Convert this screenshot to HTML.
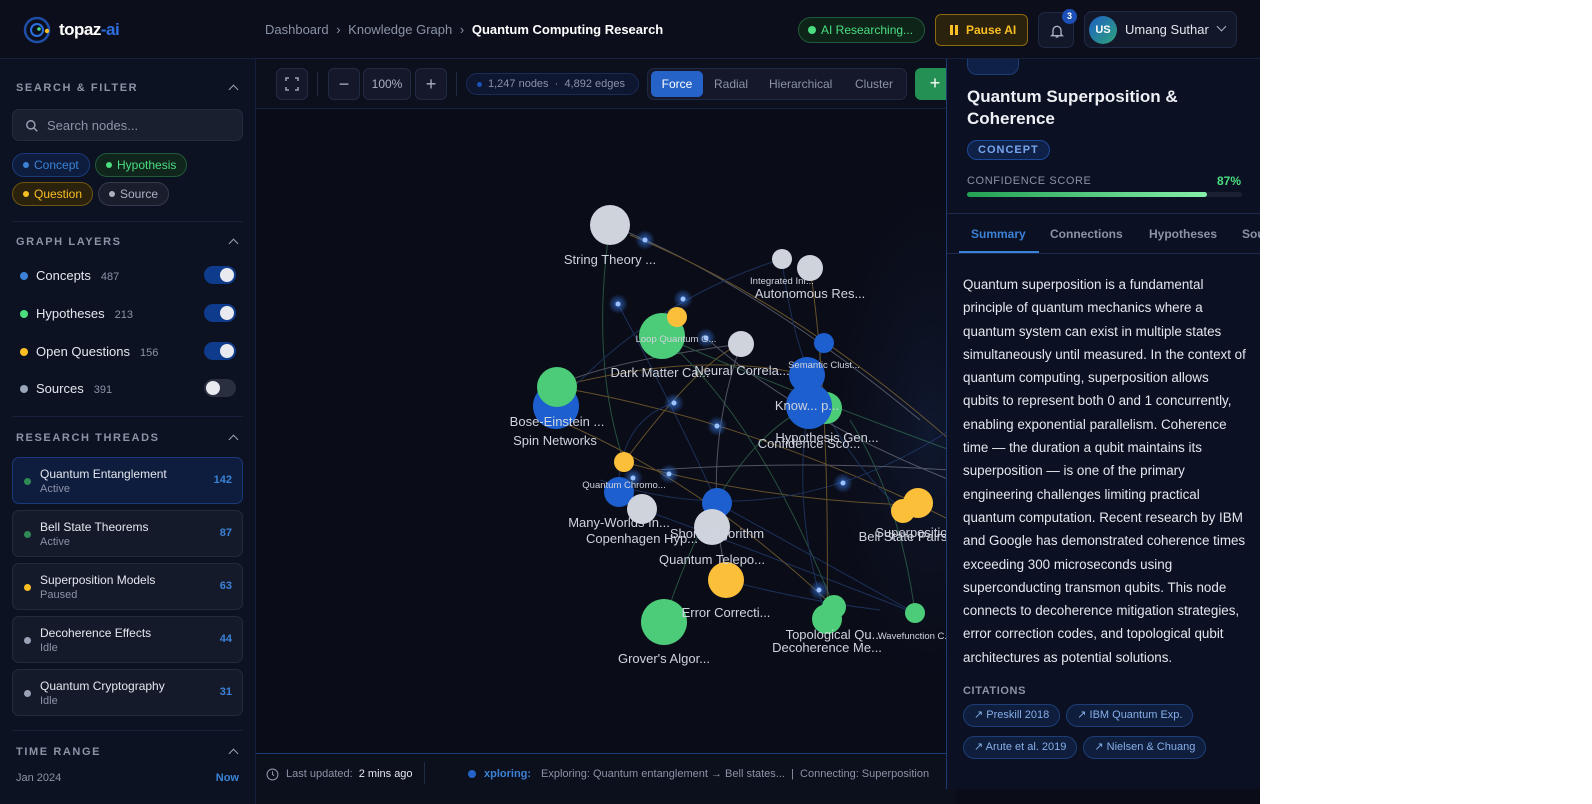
<!DOCTYPE html>
<html><head><meta charset="utf-8">
<style>
*{box-sizing:border-box;margin:0;padding:0}
body{width:1592px;height:804px;background:#fff;font-family:"Liberation Sans",sans-serif;overflow:hidden;position:relative}
#app{position:absolute;left:0;top:0;width:1260px;height:804px;background:#0a0c17;overflow:hidden}
#hdr{position:absolute;left:0;top:0;width:1260px;height:59px;background:#0c0e1b;border-bottom:1px solid #16223d;z-index:5}
#side{position:absolute;left:0;top:59px;width:256px;height:745px;background:#0d1222;border-right:1px solid #16223d}
.sec{position:absolute;left:16px;font-size:11px;font-weight:bold;letter-spacing:1.6px;color:#8b93a7}
.chev{position:absolute;right:18px;width:7px;height:7px;border-left:1.5px solid #9aa2b5;border-top:1.5px solid #9aa2b5;transform:rotate(45deg)}
.hr{position:absolute;left:12px;width:231px;height:1px;background:#18203a}
.chip{position:absolute;height:24px;border-radius:12px;font-size:12px;padding:0 10px 0 21px;line-height:22px}
.chip:before{content:"";position:absolute;left:10px;top:8px;width:6px;height:6px;border-radius:50%;background:currentColor}
.layer{position:absolute;left:20px;font-size:13px;color:#e4e7ee}
.layer i{display:inline-block;width:8px;height:8px;border-radius:50%;margin-right:8px}
.layer span{color:#8b93a7;font-size:11px;margin-left:10px}
.tog{position:absolute;left:204px;width:32px;height:18px;border-radius:9px;background:#0f3b8c}
.tog:after{content:"";position:absolute;right:2px;top:2px;width:14px;height:14px;border-radius:50%;background:#e8eaf0}
.tog.off{background:#2a2f40}.tog.off:after{left:2px;right:auto}
.th{position:absolute;left:12px;width:231px;height:47px;border-radius:7px;background:#151a2b;border:1px solid #222a3e}
.th i{position:absolute;left:11px;top:20px;width:7px;height:7px;border-radius:50%}
.th b{position:absolute;left:27px;top:9px;font-weight:normal;font-size:12px;color:#e4e7ee}
.th s{position:absolute;left:27px;top:25px;text-decoration:none;font-size:11px;color:#8b93a7}
.th u{position:absolute;right:10px;top:16px;text-decoration:none;font-size:11px;font-weight:bold;color:#3b82d6}
.tb{position:absolute;top:68px;height:32px;border-radius:6px;background:#14182a;border:1px solid #222b44;color:#aab1c2;text-align:center;line-height:30px;font-size:12px}
#panel{position:absolute;left:946px;top:59px;width:314px;height:730px;background:#0b1122;border-left:1px solid #1d3a72;z-index:3}
.cit{display:inline-block;height:23px;border-radius:12px;background:#0f1e3d;border:1px solid #1d3e77;color:#86aee9;font-size:11px;line-height:21px;padding:0 10px;margin-right:6px;margin-bottom:9px}
</style></head><body><div id="app">
<div id="hdr">
 <svg style="position:absolute;left:22px;top:15px" width="30" height="30" viewBox="0 0 30 30"><circle cx="15" cy="15" r="12" fill="none" stroke="#1e4fa8" stroke-width="2.5"/><circle cx="15" cy="15" r="6" fill="none" stroke="#2d6fe0" stroke-width="2"/><circle cx="17" cy="14" r="1.8" fill="#4ade80"/><circle cx="25" cy="16" r="2.2" fill="#fbbf24"/></svg>
 <div style="position:absolute;left:59px;top:20px;font-size:17px;font-weight:bold;color:#fff;letter-spacing:-0.5px">topaz<span style="color:#2d6fe0">-ai</span></div>
 <div style="position:absolute;left:265px;top:22px;font-size:13px;color:#8b93a7">Dashboard <span style="margin:0 4px">›</span> Knowledge Graph <span style="margin:0 4px">›</span> <b style="color:#fff">Quantum Computing Research</b></div>
 <div style="position:absolute;left:798px;top:17px;width:127px;height:26px;border-radius:13px;background:#0f2419;border:1px solid #1f5a3a;color:#4ade80;font-size:12px;line-height:24px;padding-left:22px">AI Researching...<i style="position:absolute;left:9px;top:8px;width:8px;height:8px;border-radius:50%;background:#4ade80"></i></div>
 <div style="position:absolute;left:935px;top:14px;width:93px;height:32px;border-radius:6px;background:#2a220c;border:1px solid #8a6a10;color:#fbbf24;font-size:12px;font-weight:bold;line-height:30px;padding-left:30px"><i style="position:absolute;left:14px;top:10px;width:3px;height:10px;background:#fbbf24"></i><i style="position:absolute;left:19px;top:10px;width:3px;height:10px;background:#fbbf24"></i>Pause AI</div>
 <div style="position:absolute;left:1038px;top:12px;width:36px;height:36px;border-radius:7px;background:#121729;border:1px solid #1f2a45"><svg style="position:absolute;left:10px;top:10px" width="16" height="16" viewBox="0 0 24 24" fill="none" stroke="#aab1c2" stroke-width="2"><path d="M6 17V11a6 6 0 0 1 12 0v6l2 2H4z"/><path d="M10 21h4"/></svg><b style="position:absolute;right:-4px;top:-4px;width:15px;height:15px;border-radius:50%;background:#1d4fb8;color:#fff;font-size:9px;text-align:center;line-height:15px">3</b></div>
 <div style="position:absolute;left:1084px;top:11px;width:153px;height:37px;border-radius:8px;background:#121729;border:1px solid #1f2a45"><div style="position:absolute;left:4px;top:4px;width:28px;height:28px;border-radius:50%;background:linear-gradient(135deg,#1d5fc4,#2fa37a);color:#fff;font-size:11px;font-weight:bold;text-align:center;line-height:28px">US</div><span style="position:absolute;left:40px;top:10px;font-size:13px;color:#e4e7ee">Umang Suthar</span><i style="position:absolute;left:133px;top:11px;width:7px;height:7px;border-right:1.5px solid #aab1c2;border-bottom:1.5px solid #aab1c2;transform:rotate(45deg)"></i></div>
</div>

<div id="side">
 <div class="sec" style="top:23px">SEARCH &amp; FILTER</div><i class="chev" style="top:27px"></i>
 <div style="position:absolute;left:12px;top:50px;width:231px;height:32px;border-radius:7px;background:#1a1f30;border:1px solid #232b42"><svg style="position:absolute;left:12px;top:9px" width="14" height="14" viewBox="0 0 24 24" fill="none" stroke="#9aa2b5" stroke-width="2.4"><circle cx="10" cy="10" r="7"/><path d="M15 15l6 6"/></svg><span style="position:absolute;left:34px;top:8px;font-size:13px;color:#8b93a7">Search nodes...</span></div>
 <div class="chip" style="left:12px;top:94px;background:#0e1d3d;border:1px solid #1a3a78;color:#3b82d6">Concept</div>
 <div class="chip" style="left:95px;top:94px;background:#10261c;border:1px solid #1f5a3a;color:#4ade80">Hypothesis</div>
 <div class="chip" style="left:12px;top:123px;background:#2a220c;border:1px solid #6e5610;color:#fbbf24">Question</div>
 <div class="chip" style="left:98px;top:123px;background:#1a1e2c;border:1px solid #343a4d;color:#aab1c2">Source</div>
 <div class="hr" style="top:162px"></div>
 <div class="sec" style="top:177px">GRAPH LAYERS</div><i class="chev" style="top:181px"></i>
 <div class="layer" style="top:209px"><i style="background:#3b82d6"></i>Concepts<span>487</span></div><div class="tog" style="top:207px"></div>
 <div class="layer" style="top:247px"><i style="background:#4ade80"></i>Hypotheses<span>213</span></div><div class="tog" style="top:245px"></div>
 <div class="layer" style="top:285px"><i style="background:#fbbf24"></i>Open Questions<span>156</span></div><div class="tog" style="top:283px"></div>
 <div class="layer" style="top:322px"><i style="background:#9aa6b8"></i>Sources<span>391</span></div><div class="tog off" style="top:320px"></div>
 <div class="hr" style="top:357px"></div>
 <div class="sec" style="top:373px">RESEARCH THREADS</div><i class="chev" style="top:377px"></i>
 <div class="th" style="top:398px;background:#0e1d3d;border-color:#1a3a78"><i style="background:#2f8a55"></i><b>Quantum Entanglement</b><s>Active</s><u>142</u></div>
 <div class="th" style="top:451px"><i style="background:#2f8a55"></i><b>Bell State Theorems</b><s>Active</s><u>87</u></div>
 <div class="th" style="top:504px"><i style="background:#fbbf24"></i><b>Superposition Models</b><s>Paused</s><u>63</u></div>
 <div class="th" style="top:557px"><i style="background:#9aa2b5"></i><b>Decoherence Effects</b><s>Idle</s><u>44</u></div>
 <div class="th" style="top:610px"><i style="background:#9aa2b5"></i><b>Quantum Cryptography</b><s>Idle</s><u>31</u></div>
 <div class="hr" style="top:671px"></div>
 <div class="sec" style="top:687px">TIME RANGE</div><i class="chev" style="top:691px"></i>
 <div style="position:absolute;left:16px;top:713px;font-size:11px;color:#8b93a7">Jan 2024</div>
 <div style="position:absolute;right:16px;top:713px;font-size:11px;font-weight:bold;color:#3b82d6">Now</div>
</div>

<div style="position:absolute;left:256px;top:59px;width:700px;height:50px;background:#0c0f1c;border-bottom:1px solid #16223d"></div>
<div class="tb" style="left:276px;width:32px"><svg width="14" height="14" viewBox="0 0 14 14" style="margin-top:8px" fill="none" stroke="#9aa2b5" stroke-width="1.5"><path d="M1 4V1h3M10 1h3v3M13 10v3h-3M4 13H1v-3"/></svg></div>
<div style="position:absolute;left:317px;top:72px;width:1px;height:24px;background:#222b44"></div>
<div class="tb" style="left:328px;width:32px;font-size:18px">−</div>
<div class="tb" style="left:363px;width:48px">100%</div>
<div class="tb" style="left:415px;width:32px;font-size:18px">+</div>
<div style="position:absolute;left:456px;top:72px;width:1px;height:24px;background:#222b44"></div>
<div style="position:absolute;left:466px;top:73px;width:173px;height:22px;border-radius:11px;background:#0e1630;border:1px solid #1a2c55;font-size:11px;color:#8b93a7;line-height:20px;padding-left:21px">1,247 nodes &nbsp;·&nbsp; 4,892 edges<i style="position:absolute;left:10px;top:8px;width:5px;height:5px;border-radius:50%;background:#1d4fb8"></i></div>
<div style="position:absolute;left:647px;top:68px;width:260px;height:32px;border-radius:7px;background:#14182a;border:1px solid #1f2a45"></div>
<div style="position:absolute;left:651px;top:71px;width:52px;height:26px;border-radius:5px;background:#2563c9;color:#fff;font-size:12px;text-align:center;line-height:26px">Force</div>
<div style="position:absolute;left:714px;top:77px;font-size:12px;color:#8b93a7">Radial</div>
<div style="position:absolute;left:769px;top:77px;font-size:12px;color:#8b93a7">Hierarchical</div>
<div style="position:absolute;left:855px;top:77px;font-size:12px;color:#8b93a7">Cluster</div>
<div style="position:absolute;left:915px;top:68px;width:40px;height:32px;border-radius:6px;background:#259054;color:#fff;font-size:18px;text-align:center;line-height:30px">+</div>

<svg style="position:absolute;left:256px;top:109px" width="700" height="644" viewBox="256 109 700 644" font-family="Liberation Sans, sans-serif">
<defs><radialGradient id="gl"><stop offset="0" stop-color="#3b82f6" stop-opacity=".7"/><stop offset="1" stop-color="#3b82f6" stop-opacity="0"/></radialGradient>
<radialGradient id="bg2" cx=".9" cy=".5" r=".5"><stop offset="0" stop-color="#132040" stop-opacity=".6"/><stop offset="1" stop-color="#0a0c17" stop-opacity="0"/></radialGradient></defs>
<rect x="256" y="109" width="700" height="644" fill="#0a0c17"/>
<rect x="700" y="109" width="256" height="644" fill="url(#bg2)"/>
<g fill="none" stroke-width="1" opacity=".55">
<path d="M610 225 Q750 280 920 420" stroke="#8a8f9e"/><path d="M630 235 Q790 300 950 440" stroke="#b08a3a"/>
<path d="M610 225 Q590 360 624 462" stroke="#3f8a60"/><path d="M618 304 Q680 420 717 503" stroke="#2a4f8f"/>
<path d="M557 387 Q700 350 807 375" stroke="#b08a3a"/><path d="M557 387 Q750 420 950 520" stroke="#b08a3a"/>
<path d="M782 259 Q650 300 556 406" stroke="#2a4f8f"/><path d="M741 344 Q620 360 570 380" stroke="#8a8f9e"/>
<path d="M624 462 Q760 500 910 505" stroke="#b08a3a"/><path d="M642 509 Q780 560 915 613" stroke="#2a4f8f"/>
<path d="M624 462 Q700 360 741 344" stroke="#b08a3a"/><path d="M662 336 Q760 420 834 607" stroke="#3f8a60"/>
<path d="M824 343 Q780 480 827 619" stroke="#2a4f8f"/><path d="M809 406 Q720 450 664 622" stroke="#3f8a60"/>
<path d="M717 503 Q820 560 915 613" stroke="#2a4f8f"/><path d="M726 580 Q800 600 880 610" stroke="#2a4f8f"/>
<path d="M600 480 Q780 540 950 430" stroke="#2a4f8f"/><path d="M656 470 Q800 460 950 470" stroke="#8a8f9e"/>
<path d="M810 268 Q830 400 827 619" stroke="#b08a3a"/><path d="M782 259 Q800 420 903 511" stroke="#2a4f8f"/>
<path d="M662 336 Q760 380 950 450" stroke="#3f8a60"/><path d="M706 338 Q800 420 950 480" stroke="#8a8f9e"/>
<path d="M618 490 Q620 420 674 403" stroke="#2a4f8f"/><path d="M727 580 Q700 460 741 344" stroke="#8a8f9e"/>
<path d="M557 420 Q700 480 834 607" stroke="#b08a3a"/><path d="M850 420 Q900 500 915 613" stroke="#3f8a60"/>
</g>
<g>
<circle cx="645" cy="240" r="10" fill="url(#gl)"/><circle cx="645" cy="240" r="2.5" fill="#9cc3ff"/>
<circle cx="618" cy="304" r="10" fill="url(#gl)"/><circle cx="618" cy="304" r="2.5" fill="#9cc3ff"/>
<circle cx="683" cy="299" r="10" fill="url(#gl)"/><circle cx="683" cy="299" r="2.5" fill="#9cc3ff"/>
<circle cx="706" cy="338" r="10" fill="url(#gl)"/><circle cx="706" cy="338" r="2.5" fill="#9cc3ff"/>
<circle cx="674" cy="403" r="10" fill="url(#gl)"/><circle cx="674" cy="403" r="2.5" fill="#9cc3ff"/>
<circle cx="717" cy="426" r="10" fill="url(#gl)"/><circle cx="717" cy="426" r="2.5" fill="#9cc3ff"/>
<circle cx="669" cy="474" r="10" fill="url(#gl)"/><circle cx="669" cy="474" r="2.5" fill="#9cc3ff"/>
<circle cx="633" cy="478" r="10" fill="url(#gl)"/><circle cx="633" cy="478" r="2.5" fill="#9cc3ff"/>
<circle cx="843" cy="483" r="10" fill="url(#gl)"/><circle cx="843" cy="483" r="2.5" fill="#9cc3ff"/>
<circle cx="819" cy="590" r="10" fill="url(#gl)"/><circle cx="819" cy="590" r="2.5" fill="#9cc3ff"/>
</g>
<g>
<circle cx="610" cy="225" r="20" fill="#cfd3dc"/>
<circle cx="782" cy="259" r="10" fill="#cfd3dc"/><circle cx="810" cy="268" r="13" fill="#cfd3dc"/>
<circle cx="662" cy="336" r="23" fill="#4ccb78"/><circle cx="677" cy="317" r="10" fill="#fbbf3a"/>
<circle cx="741" cy="344" r="13" fill="#cfd3dc"/>
<circle cx="824" cy="343" r="10" fill="#1d5fcf"/><circle cx="807" cy="375" r="18" fill="#1d5fcf"/>
<circle cx="556" cy="406" r="23" fill="#1d5fcf"/><circle cx="557" cy="387" r="20" fill="#4ccb78"/>
<circle cx="826" cy="408" r="16" fill="#4ccb78"/><circle cx="809" cy="406" r="23" fill="#1d5fcf"/>
<circle cx="624" cy="462" r="10" fill="#fbbf3a"/><circle cx="619" cy="492" r="15" fill="#1d5fcf"/><circle cx="642" cy="509" r="15" fill="#cfd3dc"/>
<circle cx="717" cy="503" r="15" fill="#1d5fcf"/><circle cx="712" cy="527" r="18" fill="#cfd3dc"/>
<circle cx="726" cy="580" r="18" fill="#fbbf3a"/><circle cx="664" cy="622" r="23" fill="#4ccb78"/>
<circle cx="834" cy="607" r="12" fill="#4ccb78"/><circle cx="827" cy="619" r="15" fill="#4ccb78"/>
<circle cx="915" cy="613" r="10" fill="#4ccb78"/>
<circle cx="903" cy="511" r="12" fill="#fbbf3a"/><circle cx="918" cy="503" r="15" fill="#fbbf3a"/>
</g>
<g fill="#d0d4de" font-size="13" text-anchor="middle">
<text x="610" y="264">String Theory ...</text>
<text x="782" y="284" font-size="9.5">Integrated Inf...</text>
<text x="810" y="298">Autonomous Res...</text>
<text x="676" y="342" font-size="9.5">Loop Quantum G...</text>
<text x="660" y="377">Dark Matter Ca...</text><text x="742" y="375">Neural Correla...</text>
<text x="824" y="368" font-size="9.5">Semantic Clust...</text>
<text x="807" y="410">Know...           p...</text>
<text x="827" y="442">Hypothesis Gen...</text><text x="809" y="448">Confidence Sco...</text>
<text x="557" y="426">Bose-Einstein ...</text><text x="555" y="445">Spin Networks</text>
<text x="624" y="488" font-size="9.5">Quantum Chromo...</text>
<text x="619" y="527">Many-Worlds In...</text><text x="642" y="543">Copenhagen Hyp...</text>
<text x="717" y="538">Shor's Algorithm</text><text x="712" y="564">Quantum Telepo...</text>
<text x="726" y="617">Error Correcti...</text><text x="664" y="663">Grover's Algor...</text>
<text x="834" y="639">Topological Qu...</text><text x="827" y="652">Decoherence Me...</text>
<text x="915" y="639" font-size="9.5">Wavefunction C...</text>
<text x="915" y="537">Superposition</text><text x="903" y="541">Bell State Pairs</text>
</g>
</svg>

<div style="position:absolute;left:256px;top:753px;width:700px;height:51px;background:#0c0f1c;border-top:1px solid #1a3a78;font-size:11px;color:#8b93a7">
 <svg style="position:absolute;left:10px;top:14px" width="13" height="13" viewBox="0 0 24 24" fill="none" stroke="#8b93a7" stroke-width="2"><circle cx="12" cy="12" r="10"/><path d="M12 6v6l3 2"/></svg>
 <span style="position:absolute;left:30px;top:14px">Last updated: <span style="color:#e4e7ee;margin-left:3px">2 mins ago</span></span>
 <i style="position:absolute;left:168px;top:8px;width:1px;height:22px;background:#1f2a45"></i>
 <i style="position:absolute;left:212px;top:16px;width:8px;height:8px;border-radius:50%;background:#2563c9"></i>
 <span style="position:absolute;left:228px;top:14px;color:#3b82d6;font-weight:bold">xploring:</span>
 <span style="position:absolute;left:285px;top:14px;white-space:nowrap">Exploring: Quantum entanglement → Bell states... &nbsp;| &nbsp;Connecting: Superposition</span>
</div>

<div id="panel">
 <div style="position:absolute;left:20px;top:-20px;width:52px;height:36px;border-radius:10px;background:#0f2147;border:1px solid #1d3e77"></div>
 <div style="position:absolute;left:20px;top:27px;width:260px;font-size:17px;font-weight:bold;color:#eef0f5;line-height:22px">Quantum Superposition &amp; Coherence</div>
 <div style="position:absolute;left:20px;top:81px;height:20px;border-radius:10px;background:#0f2147;border:1px solid #1d4a9a;color:#78a6ee;font-size:11px;font-weight:bold;letter-spacing:1px;line-height:18px;padding:0 10px">CONCEPT</div>
 <div style="position:absolute;left:20px;top:116px;font-size:11px;letter-spacing:.6px;color:#8b93a7">CONFIDENCE SCORE</div>
 <div style="position:absolute;right:19px;top:115px;font-size:12px;font-weight:bold;color:#4ade80">87%</div>
 <div style="position:absolute;left:20px;top:133px;width:275px;height:5px;border-radius:3px;background:#1a2134"><div style="width:240px;height:5px;border-radius:3px;background:linear-gradient(90deg,#22a054,#86efac)"></div></div>
 <div style="position:absolute;left:0;top:154px;width:314px;height:1px;background:#1a2a4d"></div>
 <div style="position:absolute;left:24px;top:168px;font-size:12px;font-weight:bold;color:#3b82d6">Summary</div>
 <div style="position:absolute;left:12px;top:192px;width:80px;height:2px;background:#3b82d6"></div>
 <div style="position:absolute;left:103px;top:168px;font-size:12px;font-weight:bold;color:#8b93a7">Connections</div>
 <div style="position:absolute;left:202px;top:168px;font-size:12px;font-weight:bold;color:#8b93a7">Hypotheses</div>
 <div style="position:absolute;left:295px;top:168px;font-size:12px;font-weight:bold;color:#8b93a7">Sou</div>
 <div style="position:absolute;left:0;top:194px;width:314px;height:1px;background:#1a2a4d"></div>
 <div style="position:absolute;left:16px;top:214px;width:300px;white-space:nowrap;font-size:13.4px;line-height:23.3px;color:#e4e7ee">Quantum superposition is a fundamental<br>principle of quantum mechanics where a<br>quantum system can exist in multiple states<br>simultaneously until measured. In the context of<br>quantum computing, superposition allows<br>qubits to represent both 0 and 1 concurrently,<br>enabling exponential parallelism. Coherence<br>time — the duration a qubit maintains its<br>superposition — is one of the primary<br>engineering challenges limiting practical<br>quantum computation. Recent research by IBM<br>and Google has demonstrated coherence times<br>exceeding 300 microseconds using<br>superconducting transmon qubits. This node<br>connects to decoherence mitigation strategies,<br>error correction codes, and topological qubit<br>architectures as potential solutions.</div>
 <div style="position:absolute;left:16px;top:626px;font-size:11px;font-weight:bold;letter-spacing:.6px;color:#8b93a7">CITATIONS</div>
 <div style="position:absolute;left:16px;top:645px;width:290px"><span class="cit">↗ Preskill 2018</span><span class="cit">↗ IBM Quantum Exp.</span><br><span class="cit">↗ Arute et al. 2019</span><span class="cit">↗ Nielsen &amp; Chuang</span></div>
</div>
</div></body></html>
